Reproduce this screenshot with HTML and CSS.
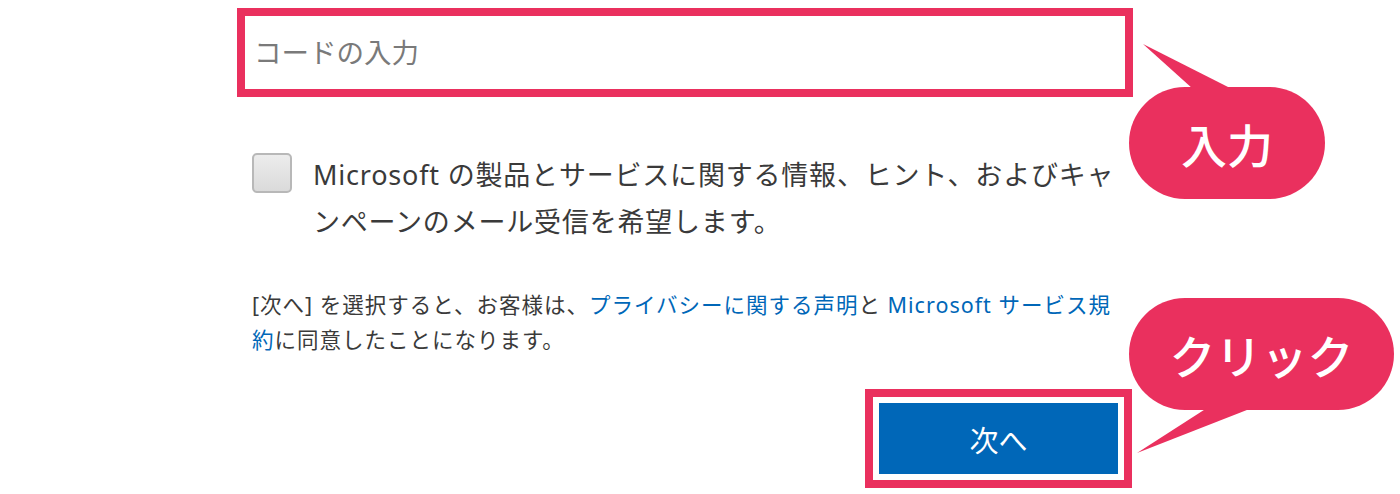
FILE: index.html
```html
<!doctype html>
<html lang="ja">
  <head>
    <meta charset="UTF-8" />
    <meta name="viewport" content="width=device-width, initial-scale=1" />
    <title>コードの入力</title>
    <link rel="stylesheet" href="styles.css">
  </head>

  <body>
    <div class="page">
      <form class="signup-form">
        <input class="code-input" type="text" placeholder="コードの入力" />

        <label class="optin">
          <span class="checkbox"></span>
          <span class="optin-text">Microsoft の製品とサービスに関する情報、ヒント、およびキャンペーンのメール受信を希望します。</span>
        </label>

        <p class="legal">
          [次へ] を選択すると、お客様は、<a href="#">プライバシーに関する声明</a>と <a href="#">Microsoft サービス規約</a>に同意したことになります。
        </p>

        <div class="actions">
          <button class="next-button" type="button">次へ</button>
        </div>
      </form>

      <!-- annotation bubbles -->
      <div class="bubble bubble-input">入力</div>
      <div class="bubble bubble-click">クリック</div>
    </div>
  </body>
</html>
```

FILE: styles.css
```css
*,
*::before,
*::after {
  margin: 0;
  padding: 0;
  box-sizing: border-box;
}

body {
  background-color: #ffffff;
  color: #333333;
  font-family: "Noto Sans", "Noto Sans CJK JP", sans-serif;
}

.page {
  position: relative;
  width: 1400px;
  height: 494px;
  overflow: hidden;
}

.signup-form {
  display: flex;
  flex-direction: column;
  width: 896px;
  margin-left: 237px;
  padding-top: 8px;
}

.code-input {
  width: 100%;
  height: 89px;
  border: 8px solid #ea305e;
  padding: 0 9px;
  font-family: inherit;
  font-size: 27.5px;
  color: #333333;
  outline: none;
}

.code-input::placeholder {
  color: #7a7a7a;
}

.optin {
  display: flex;
  align-items: flex-start;
  gap: 21px;
  margin-top: 54px;
  padding: 0 15px;
}

.checkbox {
  flex: none;
  width: 40px;
  height: 40px;
  margin-top: 2px;
  border: 2px solid #b8b8b8;
  border-radius: 5px;
  background-image: linear-gradient(180deg, #ececec, #dadada);
}

.optin-text {
  width: 812px;
  font-size: 27px;
  line-height: 47px;
  letter-spacing: 0.8px;
  color: #3a3a3a;
}

.legal {
  margin-top: 42px;
  padding: 0 15px;
  font-size: 21.5px;
  line-height: 35px;
  letter-spacing: 1px;
  color: #3a3a3a;
}

.legal a {
  color: #0067b8;
  text-decoration: none;
}

.actions {
  display: flex;
  justify-content: flex-end;
  margin-top: 46px;
  padding: 0 15px;
}

.next-button {
  width: 239px;
  height: 71px;
  border: none;
  background-color: #0067b8;
  color: #ffffff;
  font-family: inherit;
  font-size: 29px;
  outline: 8px solid #ea305e;
  outline-offset: 6px;
}

.bubble {
  position: absolute;
  display: flex;
  justify-content: center;
  align-items: center;
  height: 112px;
  border-radius: 56px;
  background-color: #ea305e;
  color: #ffffff;
  font-family: "Noto Sans CJK JP", sans-serif;
  font-size: 46px;
  font-weight: 500;
}

.bubble::before {
  content: "";
  position: absolute;
  background-color: #ea305e;
}

.bubble-input {
  left: 1129px;
  top: 87px;
  width: 196px;
}

.bubble-input::before {
  left: 14px;
  top: -43px;
  width: 89px;
  height: 45px;
  clip-path: polygon(0 0, 89px 45px, 50px 45px);
}

.bubble-click {
  left: 1129px;
  top: 298px;
  width: 265px;
}

.bubble-click::before {
  left: 8px;
  top: 110px;
  width: 115px;
  height: 45px;
  clip-path: polygon(70px 0, 115px 0, 0 45px);
}
```
